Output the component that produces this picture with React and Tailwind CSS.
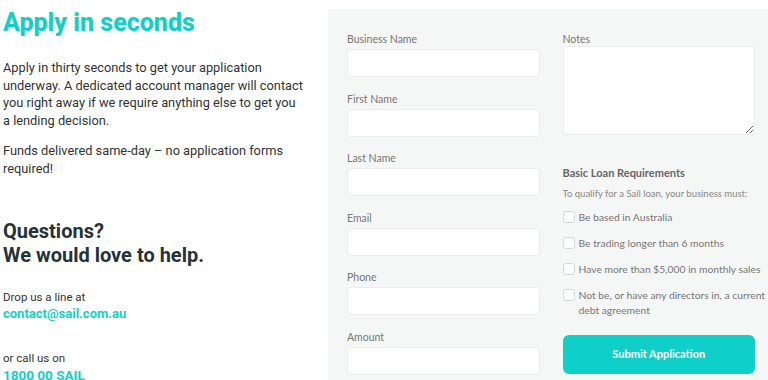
import React from "react";

const Field = ({ label }) => (
  <div className="flex flex-col">
    <label className="text-[10.5px] leading-[14px] text-[#777] mb-[3px]">{label}</label>
    <div className="h-[28px] bg-white border border-[#ececec] rounded-[3px]" />
  </div>
);

const Check = ({ children }) => (
  <div className="flex items-start gap-[4px] text-[10.3px] leading-[15px] text-[#777]">
    <span className="mt-[1px] w-[12px] h-[12px] shrink-0 bg-white border border-[#d8d8d8] rounded-[3px]" />
    <span>{children}</span>
  </div>
);

export default function App() {
  return (
    <div className="w-[768px] h-[380px] flex bg-white overflow-hidden" style={{ fontFamily: "Roboto, 'Liberation Sans', sans-serif" }}>
      <div className="w-[328px] shrink-0 pl-[3px] pt-[8px]">
        <h1 className="text-[25px] leading-[30px] font-extrabold text-[#13cfc6]">Apply in seconds</h1>
        <p className="mt-[21px] text-[12.8px] leading-[17.6px] text-[#333] pr-[20px]">
          Apply in thirty seconds to get your application underway. A dedicated account manager will contact you right away if we require anything else to get you a{"\u00a0"}lending decision.
        </p>
        <p className="mt-[13px] text-[12.8px] leading-[17.6px] text-[#333] pr-[40px]">
          Funds delivered same-day – no application forms required!
        </p>
        <h2 className="mt-[41px] text-[20px] leading-[24px] font-bold text-[#263238]">
          Questions?<br />We would love to help.
        </h2>
        <p className="mt-[22px] text-[11.5px] leading-[16px] text-[#333]">Drop us a line at</p>
        <p className="mt-[0px] text-[13px] leading-[18px] font-bold text-[#13cfc6]">contact@sail.com.au</p>
        <p className="mt-[27px] text-[11.5px] leading-[16px] text-[#333]">or call us on</p>
        <p className="mt-[0px] text-[13.5px] leading-[18px] font-bold text-[#13cfc6]">1800 00 SAIL</p>
      </div>
      <div className="flex-1 mt-[9px] bg-[#f5f6f6] pl-[19px] pr-[13px] pt-[23px] grid grid-cols-2 gap-x-[23px] items-start" style={{ fontFamily: "Lato, 'Liberation Sans', sans-serif" }}>
        <div className="flex flex-col gap-[14.5px]">
          <Field label="Business Name" />
          <Field label="First Name" />
          <Field label="Last Name" />
          <Field label="Email" />
          <Field label="Phone" />
          <Field label="Amount" />
        </div>
        <div className="flex flex-col">
          <label className="text-[10.5px] leading-[14px] text-[#777]">Notes</label>
          <textarea className="h-[89px] bg-white border border-[#ececec] rounded-[2px] resize-y" />
          <h3 className="mt-[31px] text-[11px] leading-[14px] font-bold text-[#666]">Basic Loan Requirements</h3>
          <p className="mt-[7px] text-[9.5px] leading-[13px] text-[#888] whitespace-nowrap">To qualify for a Sail loan, your business must:</p>
          <div className="mt-[10px] w-[205px] flex flex-col gap-[11px]">
            <Check>Be based in Australia</Check>
            <Check>Be trading longer than 6 months</Check>
            <Check>Have more than $5,000 in monthly sales</Check>
            <Check>Not be, or have any directors in, a current debt agreement</Check>
          </div>
          <button className="mt-[17px] h-[39px] rounded-[6px] bg-[#0fd0c8] text-white text-[11px] font-bold">Submit Application</button>
        </div>
      </div>
    </div>
  );
}
